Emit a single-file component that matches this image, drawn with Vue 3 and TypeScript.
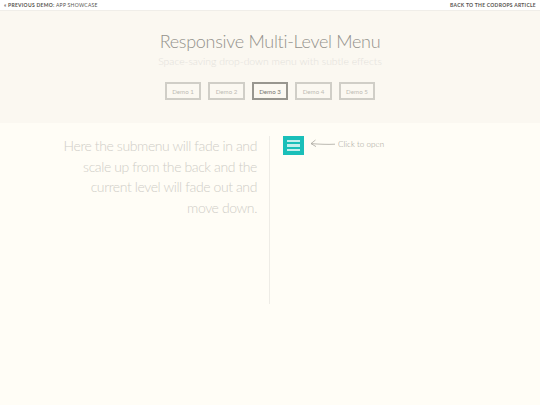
<script setup lang="ts">
const demos: string[] = ['Demo 1', 'Demo 2', 'Demo 3', 'Demo 4', 'Demo 5']
const activeDemo = 'Demo 3'
</script>

<template>
  <div class="page">
    <div class="topbar">
      <a class="prev"><span class="strong">« Previous Demo:</span> App Showcase</a>
      <a class="back">Back to the Codrops Article</a>
    </div>
    <header class="hero">
      <h1>Responsive Multi-Level Menu</h1>
      <p class="sub">Space-saving drop-down menu with subtle effects</p>
      <nav class="demos">
        <a v-for="d in demos" :key="d" class="demo" :class="{ active: d === activeDemo }">{{ d }}</a>
      </nav>
    </header>
    <main class="main">
      <div class="left">
        <p>Here the submenu will fade in and scale up from the back and the current level will fade out and move down.</p>
      </div>
      <div class="right">
        <button class="burger" aria-label="Open menu"><span></span><span></span><span></span></button>
        <svg class="arrow" width="26" height="10" viewBox="0 0 26 10" fill="none" stroke="#aaa79f" stroke-width="0.8">
          <path d="M25 5.2 C17 5.6 9 5.2 1 4.6 M5.5 1 L1 4.6 L6 7.6" />
        </svg>
        <span class="hint">Click to open</span>
      </div>
    </main>
  </div>
</template>

<style scoped>
.page {
  width: 540px;
  height: 405px;
  overflow: hidden;
  background: #fffdf6;
  font-family: Lato, "Noto Sans", sans-serif;
  display: flex;
  flex-direction: column;
}
.topbar {
  height: 10px;
  flex: none;
  background: #fff;
  border-bottom: 1px solid #f0eee9;
  display: flex;
  justify-content: space-between;
  align-items: center;
  padding: 0 4px;
  font-size: 5px;
  letter-spacing: 0.28px;
  text-transform: uppercase;
  color: #55534e;
}
.strong, .back { font-weight: 700; }
.hero {
  height: 112px;
  flex: none;
  background: #fbf8f1;
  display: flex;
  flex-direction: column;
  align-items: center;
}
h1 {
  margin: 19px 0 0;
  font-size: 18px;
  line-height: 22px;
  font-weight: 300;
  letter-spacing: -0.3px;
  color: #94928c;
}
.sub {
  margin: 2px 0 0;
  font-size: 10.4px;
  line-height: 14px;
  font-weight: 300;
  color: #e3e1db;
}
.demos {
  margin-top: 14px;
  display: flex;
  gap: 7.2px;
}
.demo {
  width: 36.3px;
  height: 18px;
  box-sizing: border-box;
  border: 2px solid #d0cec7;
  display: flex;
  align-items: center;
  justify-content: center;
  font-size: 6.2px;
  color: #bdbbb4;
}
.demo.active {
  border-color: #98968f;
  color: #77756f;
}
.main {
  flex: 1;
  display: flex;
  align-items: flex-start;
  padding-top: 13px;
}
.left {
  width: 270px;
  height: 168px;
  box-sizing: border-box;
  padding-right: 12px;
  border-right: 1px solid #eeece6;
  text-align: right;
}
.left p {
  margin: 0 0 0 62px;
  font-size: 14px;
  line-height: 20.5px;
  font-weight: 300;
  letter-spacing: -0.4px;
  color: #cfcdc7;
}
.right {
  display: flex;
  align-items: center;
  padding-left: 13px;
}
.burger {
  width: 21px;
  height: 19px;
  flex: none;
  border: 0;
  padding: 3.5px 4px;
  background: #1abfb9;
  display: flex;
  flex-direction: column;
  justify-content: space-between;
}
.burger span {
  display: block;
  height: 2.4px;
  background: #c4efec;
}
.arrow {
  margin: -3px 0 0 6px;
}
.hint {
  margin: -4px 0 0 2px;
  font-size: 8px;
  font-weight: 300;
  letter-spacing: 0.05px;
  color: #9b9890;
}
</style>
